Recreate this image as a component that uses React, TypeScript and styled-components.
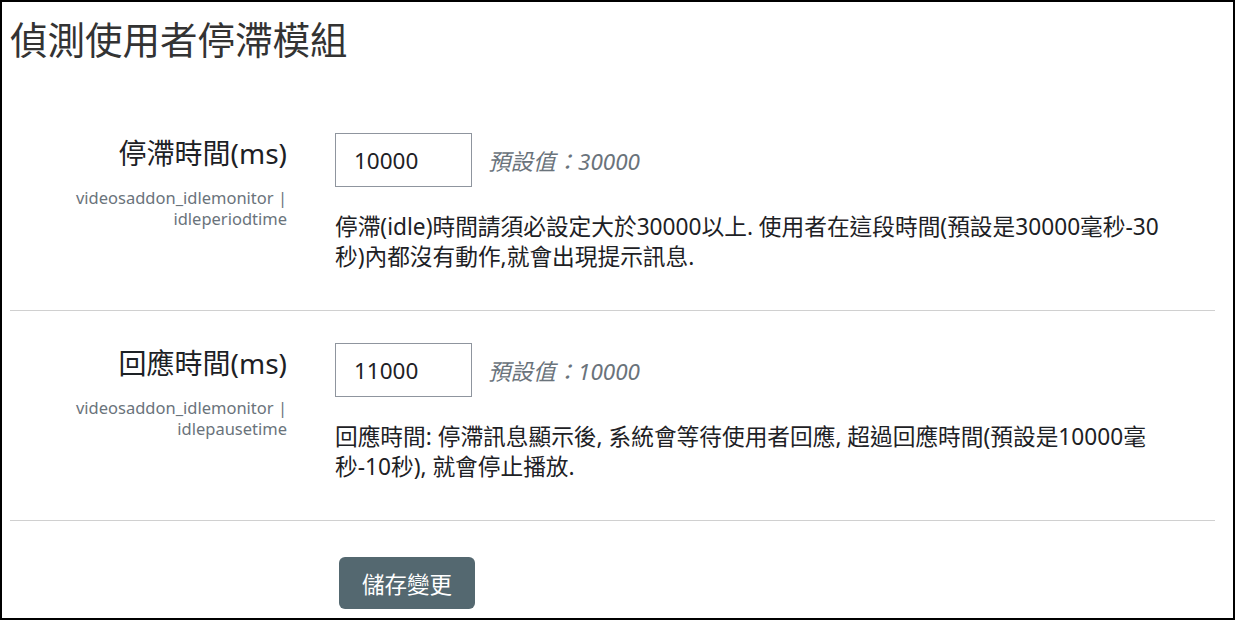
import React from "react";
import styled, { createGlobalStyle } from "styled-components";

const GlobalStyle = createGlobalStyle`
  html, body {
    margin: 0;
    padding: 0;
    background: #fff;
  }
  body {
    font-family: "Segoe UI", "Noto Sans", "Noto Sans CJK TC", sans-serif;
    color: #1d2125;
  }
`;

const Frame = styled.div`
  box-sizing: border-box;
  width: 1235px;
  height: 620px;
  border: 2px solid #000;
  padding: 16px 18px 0 8px;
  overflow: hidden;
`;

const Title = styled.h2`
  margin: 0;
  font-size: 37.5px;
  line-height: 44px;
  font-weight: 400;
  color: #333;
`;

const Form = styled.div`
  margin-top: 39px;
`;

const Row = styled.div<{ $last?: boolean }>`
  display: grid;
  grid-template-columns: 277px 1fr;
  column-gap: 48px;
  padding: ${(p) => (p.$last ? "36px 0 0" : "32px 0 38px")};
  border-bottom: ${(p) => (p.$last ? "none" : "1px solid #d0d0d0")};
`;

const LabelCol = styled.div`
  text-align: right;
`;

const Label = styled.div`
  margin-top: 4px;
  font-size: 28px;
  line-height: 32px;
  color: #1d2125;
`;

const Setting = styled.div`
  margin-top: 18px;
  font-size: 16.5px;
  line-height: 21px;
  color: #6a737b;
`;

const Field = styled.div`
  display: flex;
  flex-direction: column;
`;

const InputLine = styled.div`
  display: flex;
  align-items: center;
  gap: 16px;
`;

const Input = styled.input`
  box-sizing: border-box;
  width: 137px;
  height: 54px;
  margin: 0;
  padding: 0 18px;
  border: 1px solid #8f959e;
  border-radius: 0;
  font-family: inherit;
  font-size: 22.5px;
  color: #1d2125;
  background: #fff;
  outline: none;
`;

const DefaultInfo = styled.span`
  font-size: 22.5px;
  font-style: italic;
  color: #6a737b;
`;

const Description = styled.div`
  margin-top: 25px;
  width: 832px;
  font-size: 22.7px;
  line-height: 30px;
  color: #1d2125;
`;

const SaveButton = styled.button`
  box-sizing: border-box;
  width: 136px;
  height: 52px;
  margin-left: 4px;
  border: none;
  border-radius: 6px;
  background: #546870;
  color: #fff;
  font-family: inherit;
  font-size: 22.5px;
  cursor: pointer;
`;

const settings = [
  {
    label: "停滯時間(ms)",
    code: ["videosaddon_idlemonitor |", "idleperiodtime"],
    value: "10000",
    def: "30000",
    desc: "停滯(idle)時間請須必設定大於30000以上. 使用者在這段時間(預設是30000毫秒-30秒)內都沒有動作,就會出現提示訊息.",
  },
  {
    label: "回應時間(ms)",
    code: ["videosaddon_idlemonitor |", "idlepausetime"],
    value: "11000",
    def: "10000",
    desc: "回應時間: 停滯訊息顯示後, 系統會等待使用者回應, 超過回應時間(預設是10000毫秒-10秒), 就會停止播放.",
  },
];

export default function App() {
  return (
    <>
      <GlobalStyle />
      <Frame>
        <Title>偵測使用者停滯模組</Title>
        <Form>
          {settings.map((s) => (
            <Row key={s.label}>
              <LabelCol>
                <Label>{s.label}</Label>
                <Setting>
                  {s.code[0]}
                  <br />
                  {s.code[1]}
                </Setting>
              </LabelCol>
              <Field>
                <InputLine>
                  <Input defaultValue={s.value} />
                  <DefaultInfo>預設值：{s.def}</DefaultInfo>
                </InputLine>
                <Description>{s.desc}</Description>
              </Field>
            </Row>
          ))}
          <Row $last>
            <div />
            <div>
              <SaveButton>儲存變更</SaveButton>
            </div>
          </Row>
        </Form>
      </Frame>
    </>
  );
}
